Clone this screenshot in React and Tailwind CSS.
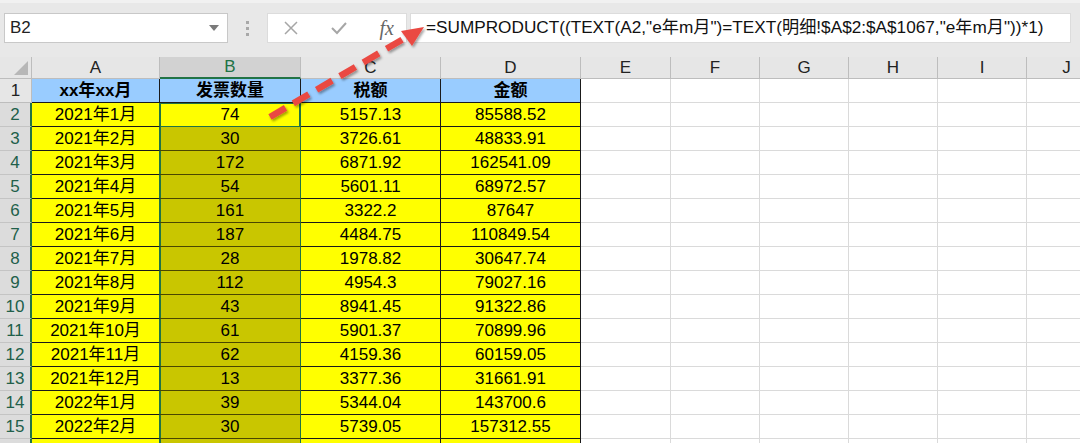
import React from "react";

const FONT = { fontFamily: '"Liberation Sans", "Noto Sans CJK SC", sans-serif' };

const colW = ["w-[32px]", "w-[128px]", "w-[141px]", "w-[140px]", "w-[140px]", "w-[90px]", "w-[89px]", "w-[89px]", "w-[89px]", "w-[89px]", "w-[80px]"];
const letters = ["", "A", "B", "C", "D", "E", "F", "G", "H", "I", "J"];

const data = [
  ["2021年1月", "74", "5157.13", "85588.52"],
  ["2021年2月", "30", "3726.61", "48833.91"],
  ["2021年3月", "172", "6871.92", "162541.09"],
  ["2021年4月", "54", "5601.11", "68972.57"],
  ["2021年5月", "161", "3322.2", "87647"],
  ["2021年6月", "187", "4484.75", "110849.54"],
  ["2021年7月", "28", "1978.82", "30647.74"],
  ["2021年8月", "112", "4954.3", "79027.16"],
  ["2021年9月", "43", "8941.45", "91322.86"],
  ["2021年10月", "61", "5901.37", "70899.96"],
  ["2021年11月", "62", "4159.36", "60159.05"],
  ["2021年12月", "13", "3377.36", "31661.91"],
  ["2022年1月", "39", "5344.04", "143700.6"],
  ["2022年2月", "30", "5739.05", "157312.55"],
  ["", "", "", ""],
];

function ColumnHeader() {
  return (
    <div className="flex h-[22px] shrink-0">
      <div className="w-[32px] shrink-0 h-full bg-[#e6e6e6] border-r border-b border-[#bdbdbd] relative">
        <div className="absolute right-[3px] bottom-[3px] w-0 h-0 border-l-[14px] border-l-transparent border-b-[14px] border-b-[#b7b7b7]" />
      </div>
      {letters.slice(1).map((l, i) => {
        const sel = l === "B";
        return (
          <div
            key={l}
            className={
              colW[i + 1] +
              " shrink-0 h-full flex items-center justify-center text-[17px] " +
              (sel
                ? "bg-[#d2d2d2] text-[#217346] border-r border-[#bdbdbd] border-b-2 border-b-[#217346]"
                : "bg-[#e6e6e6] text-[#222] border-r border-b border-[#bdbdbd]")
            }
          >
            {l}
          </div>
        );
      })}
    </div>
  );
}

function Row1() {
  const heads = ["xx年xx月", "发票数量", "税额", "金额"];
  return (
    <div className="flex h-[24px] shrink-0">
      <div className="w-[32px] shrink-0 h-full bg-[#e6e6e6] border-r border-b border-[#bdbdbd] flex items-center justify-center text-[17px] text-[#222]">
        1
      </div>
      {heads.map((h, i) => (
        <div
          key={h}
          className={
            colW[i + 1] +
            " shrink-0 h-full bg-[#99ccff] border-r border-b border-[#1a1a1a] flex items-center justify-center text-[17px] font-bold text-black"
          }
        >
          {h}
        </div>
      ))}
      {colW.slice(5).map((w, i) => (
        <div key={i} className={w + " shrink-0 h-full bg-white border-r border-b border-[#dadada]"} />
      ))}
    </div>
  );
}

function DataRow({ n, row, label }) {
  const first = n === 2;
  return (
    <div className="flex h-[24px] shrink-0">
      <div className="w-[32px] shrink-0 h-full bg-[#dcdcdc] border-r-2 border-r-[#217346] border-b border-b-[#c4c4c4] flex items-center justify-center text-[17px] text-[#215f4a]">
        {label ? n : null}
      </div>
      <div className="w-[128px] shrink-0 h-full bg-[#ffff00] border-r border-r-[#217346] border-b border-b-[#1a1a1a] flex items-center justify-center text-[17px] text-black">
        {row[0]}
      </div>
      <div
        className={
          "w-[141px] shrink-0 h-full border-r border-r-[#217346] border-b flex items-center justify-center text-[17px] text-black " +
          (first
            ? "bg-[#ffff00] border-b-[#217346] shadow-[inset_1px_1px_0_#217346,inset_-1px_0_0_#217346]"
            : "bg-[#c9c600] border-b-[#4a4600] shadow-[inset_1px_0_0_#217346]")
        }
      >
        {row[1]}
      </div>
      <div className="w-[140px] shrink-0 h-full bg-[#ffff00] border-r border-b border-[#1a1a1a] flex items-center justify-center text-[17px] text-black">
        {row[2]}
      </div>
      <div className="w-[140px] shrink-0 h-full bg-[#ffff00] border-r border-b border-[#1a1a1a] flex items-center justify-center text-[17px] text-black">
        {row[3]}
      </div>
      {colW.slice(5).map((w, i) => (
        <div key={i} className={w + " shrink-0 h-full bg-white border-r border-b border-[#dadada]"} />
      ))}
    </div>
  );
}

function Toolbar() {
  return (
    <div className="h-[57px] shrink-0 bg-[#e8e8e8] border-t-[3px] border-[#f1f1f1] flex items-start pt-[10px] pl-[4px]">
      <div className="w-[224px] h-[30px] bg-white border border-[#c8c8c8] flex items-center justify-between pl-[5px] pr-[8px]">
        <span className="text-[17px] text-[#222]">B2</span>
        <div className="w-0 h-0 border-l-[5px] border-r-[5px] border-t-[6px] border-l-transparent border-r-transparent border-t-[#7a7a7a]" />
      </div>
      <div className="w-[39px] h-[30px] flex flex-col items-center justify-center gap-[3px]">
        <div className="w-[3px] h-[3px] bg-[#a8a8a8]" />
        <div className="w-[3px] h-[3px] bg-[#a8a8a8]" />
        <div className="w-[3px] h-[3px] bg-[#a8a8a8]" />
      </div>
      <div className="w-[140px] h-[30px] bg-white border border-[#dcdcdc] flex items-center pl-[16px] pr-[12px] justify-between">
        <svg width="14" height="14" viewBox="0 0 14 14">
          <path d="M1 1 L13 13 M13 1 L1 13" stroke="#a6a6a6" strokeWidth="1.5" fill="none" />
        </svg>
        <svg width="16" height="14" viewBox="0 0 16 14">
          <path d="M1 7 L6 12 L15 2" stroke="#a6a6a6" strokeWidth="2" fill="none" />
        </svg>
        <span className="text-[20px] italic text-[#666] leading-none" style={{ fontFamily: '"Liberation Serif", serif' }}>
          fx
        </span>
      </div>
      <div className="ml-[3px] w-[661px] h-[30px] bg-white border border-[#dcdcdc] flex items-center pl-[15px]">
        <span className="text-[17.2px] text-[#111] whitespace-nowrap">
          =SUMPRODUCT((TEXT(A2,"e年m月")=TEXT(明细!$A$2:$A$1067,"e年m月"))*1)
        </span>
      </div>
    </div>
  );
}

export default function App() {
  return (
    <div className="w-[1080px] h-[443px] overflow-hidden relative bg-white flex flex-col" style={FONT}>
      <Toolbar />
      <ColumnHeader />
      <Row1 />
      {data.map((r, i) => (
        <DataRow key={i} n={i + 2} row={r} label={i < 14} />
      ))}
      <svg className="absolute left-0 top-0 pointer-events-none" width="1080" height="443">
        <defs>
          <filter id="sh" x="-20%" y="-20%" width="140%" height="140%">
            <feDropShadow dx="1.5" dy="2" stdDeviation="1.2" floodColor="#000" floodOpacity="0.35" />
          </filter>
        </defs>
        <g filter="url(#sh)">
          <line x1="270" y1="117" x2="405" y2="38" stroke="#ea4a43" strokeWidth="6.5" strokeDasharray="18 9" />
          <polygon points="424,27 401,31 412,46" fill="#ea4a43" />
        </g>
      </svg>
    </div>
  );
}
